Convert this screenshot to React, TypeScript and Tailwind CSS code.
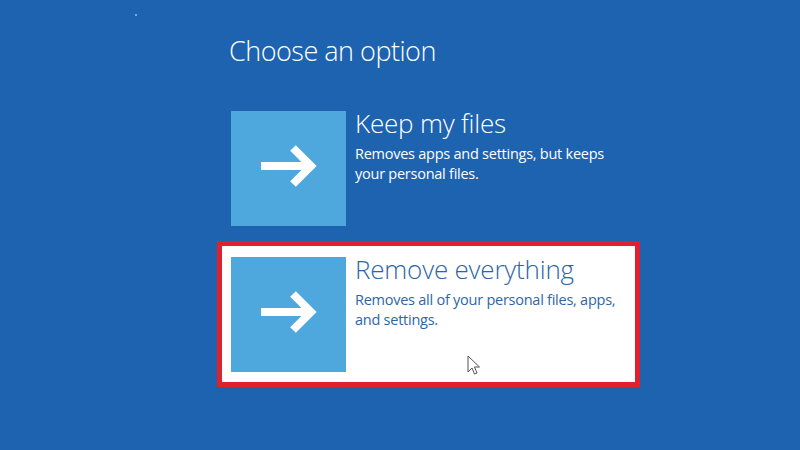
import React from "react";

function Arrow() {
  return (
    <svg width="115" height="115" viewBox="0 0 115 115">
      <path d="M30 55 H79" stroke="#ffffff" strokeWidth="8" fill="none" />
      <path d="M62 37 L80 55 L62 73" stroke="#ffffff" strokeWidth="8" fill="none" strokeLinejoin="miter" strokeMiterlimit="10" />
    </svg>
  );
}

function Option({
  title,
  desc,
  selected,
}: {
  title: string;
  desc: string[];
  selected?: boolean;
}) {
  return (
    <div
      className={
        "w-[423px] h-[146px] border-[5px] pl-[9px] pt-[11px] flex gap-[9px] " +
        (selected ? "border-[#e0212d] bg-white" : "border-transparent")
      }
    >
      <div className="w-[115px] h-[115px] bg-[#4ea7dd] shrink-0">
        <Arrow />
      </div>
      <div className="flex flex-col mt-[-3px]">
        <div
          className={
            "text-[26px] font-light leading-[30px] tracking-[-0.2px] " +
            (selected ? "text-[#2d66a8]" : "text-white")
          }
        >
          {title}
        </div>
        <div
          className={
            "mt-[6px] text-[14.5px] leading-[20px] tracking-[-0.25px] " +
            (selected ? "text-[#2d66a8]" : "text-white")
          }
        >
          {desc.map((d, i) => (
            <div key={i}>{d}</div>
          ))}
        </div>
      </div>
    </div>
  );
}

export default function App() {
  return (
    <div
      className="w-[800px] h-[450px] bg-[#1e63b0] relative overflow-hidden"
      style={{ fontFamily: '"Open Sans", "Noto Sans", sans-serif' }}
    >
      <div className="pl-[217px] pt-[35px] flex flex-col">
        <h1 className="ml-[12px] text-[27px] font-light leading-[32px] tracking-[-0.5px] text-white">
          Choose an option
        </h1>
        <div className="mt-[28px] flex flex-col">
          <Option
            title="Keep my files"
            desc={["Removes apps and settings, but keeps", "your personal files."]}
          />
          <Option
            selected
            title="Remove everything"
            desc={["Removes all of your personal files, apps,", "and settings."]}
          />
        </div>
      </div>
      <div className="absolute left-[135px] top-[14px] w-[2px] h-[2px] bg-[#6fb0ea]" />
      <svg
        className="absolute left-[467px] top-[355px]"
        width="14"
        height="21"
        viewBox="0 0 14 21"
      >
        <path
          d="M1 1 L1 17 L5 13 L7.5 19 L10 18 L7.5 12 L12.5 12 Z"
          fill="#ffffff"
          stroke="#555555"
          strokeWidth="1"
          strokeLinejoin="miter"
        />
      </svg>
    </div>
  );
}
